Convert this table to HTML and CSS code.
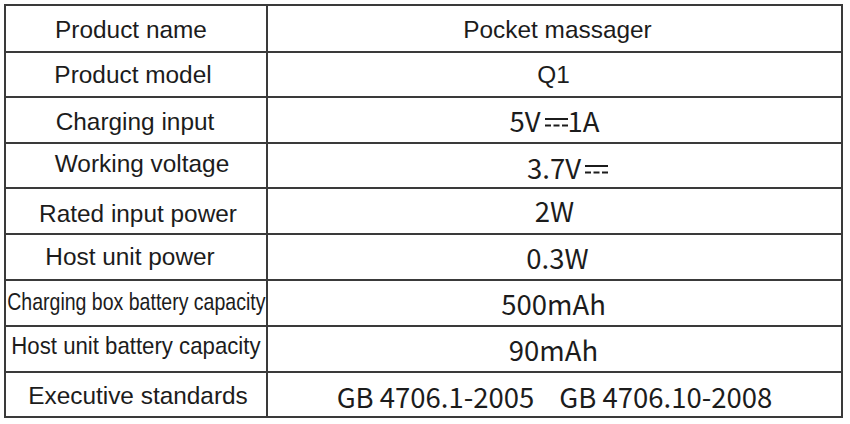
FILE: index.html
```html
<!DOCTYPE html>
<html>
<head>
<meta charset="utf-8">
<link rel="stylesheet" href="styles.css">
</head>
<body>
<div class="spec">
  <div class="cell label r1">Product name</div>
  <div class="cell value arial r1">Pocket massager</div>

  <div class="cell label r2">Product model</div>
  <div class="cell value arial r2">Q1</div>

  <div class="cell label r3">Charging input</div>
  <div class="cell value r3">5V<svg class="dc" viewBox="0 0 23 9" width="23" height="9"><rect x="0" y="0" width="23" height="2"/><rect x="0" y="6.5" width="6" height="2"/><rect x="8.5" y="6.5" width="6" height="2"/><rect x="17" y="6.5" width="6" height="2"/></svg>1A</div>

  <div class="cell label r4">Working voltage</div>
  <div class="cell value r4">3.7V<svg class="dc" viewBox="0 0 23 9" width="23" height="9"><rect x="0" y="0" width="23" height="2"/><rect x="0" y="6.5" width="6" height="2"/><rect x="8.5" y="6.5" width="6" height="2"/><rect x="17" y="6.5" width="6" height="2"/></svg></div>

  <div class="cell label r5">Rated input power</div>
  <div class="cell value r5">2W</div>

  <div class="cell label r6">Host unit power</div>
  <div class="cell value r6">0.3W</div>

  <div class="cell label r7"><span class="squeeze-strong">Charging box battery capacity</span></div>
  <div class="cell value r7">500mAh</div>

  <div class="cell label r8"><span class="squeeze">Host unit battery capacity</span></div>
  <div class="cell value r8">90mAh</div>

  <div class="cell label r9">Executive standards</div>
  <div class="cell value r9"><span>GB 4706.1-2005</span><span class="std2">GB 4706.10-2008</span></div>
</div>
</body>
</html>
```

FILE: styles.css
```css
html, body {
  margin: 0;
  padding: 0;
  background: #ffffff;
}

body {
  width: 850px;
  height: 424px;
  overflow: hidden;
}

.spec {
  margin: 4px 0 0 4px;
  width: 837px;
  display: grid;
  grid-template-columns: 262px 575px;
  grid-template-rows: 47px 45px 46px 45px 46px 46px 46px 46px 45px;
  border-top: 2px solid #3a3a3a;
  border-left: 2px solid #3a3a3a;
}

.cell {
  box-sizing: border-box;
  border-right: 2px solid #3a3a3a;
  border-bottom: 2px solid #3a3a3a;
  display: flex;
  align-items: center;
  justify-content: center;
  color: #1c1c1c;
  white-space: nowrap;
}

.label {
  font-family: "Liberation Sans", Arial, sans-serif;
  font-size: 24.4px;
}

.value {
  font-family: "Noto Sans CJK SC", "Noto Sans", sans-serif;
  font-size: 27.5px;
}

.value.arial {
  font-family: "Liberation Sans", Arial, sans-serif;
  font-size: 24.4px;
}

/* hand-placed offsets of the source document */
.label.r1 { padding: 2px 10px 0 0; }
.label.r2 { padding-right: 6px; }
.label.r3 { padding: 4px 2px 0 0; }
.label.r4 { padding: 0 0 3px 12px; }
.label.r5 { padding: 5px 0 0 4px; }
.label.r6 { padding-right: 12px; }
.label.r7 { padding-bottom: 2px; }
.label.r8 { padding-bottom: 7px; }
.label.r9 { padding: 3px 0 0 4px; }

.value.r1 { padding: 2px 0 0 6px; }
.value.r2 { padding-right: 2px; }
.value.r4 { padding: 2px 0 0 26px; }
.value.r5 { padding-bottom: 2px; }
.value.r6 { padding-left: 6px; }
.value.r7 { padding-right: 2px; }
.value.r8 { padding-right: 2px; }
.value.r9 { padding-top: 2px; }

.squeeze-strong {
  display: inline-block;
  transform: scaleX(0.8);
}

.squeeze {
  display: inline-block;
  transform: scaleX(0.91);
}

.dc {
  fill: #1c1c1c;
  margin: 5px 0 0 4px;
  align-self: center;
}

.std2 {
  margin-left: 25px;
}
```
